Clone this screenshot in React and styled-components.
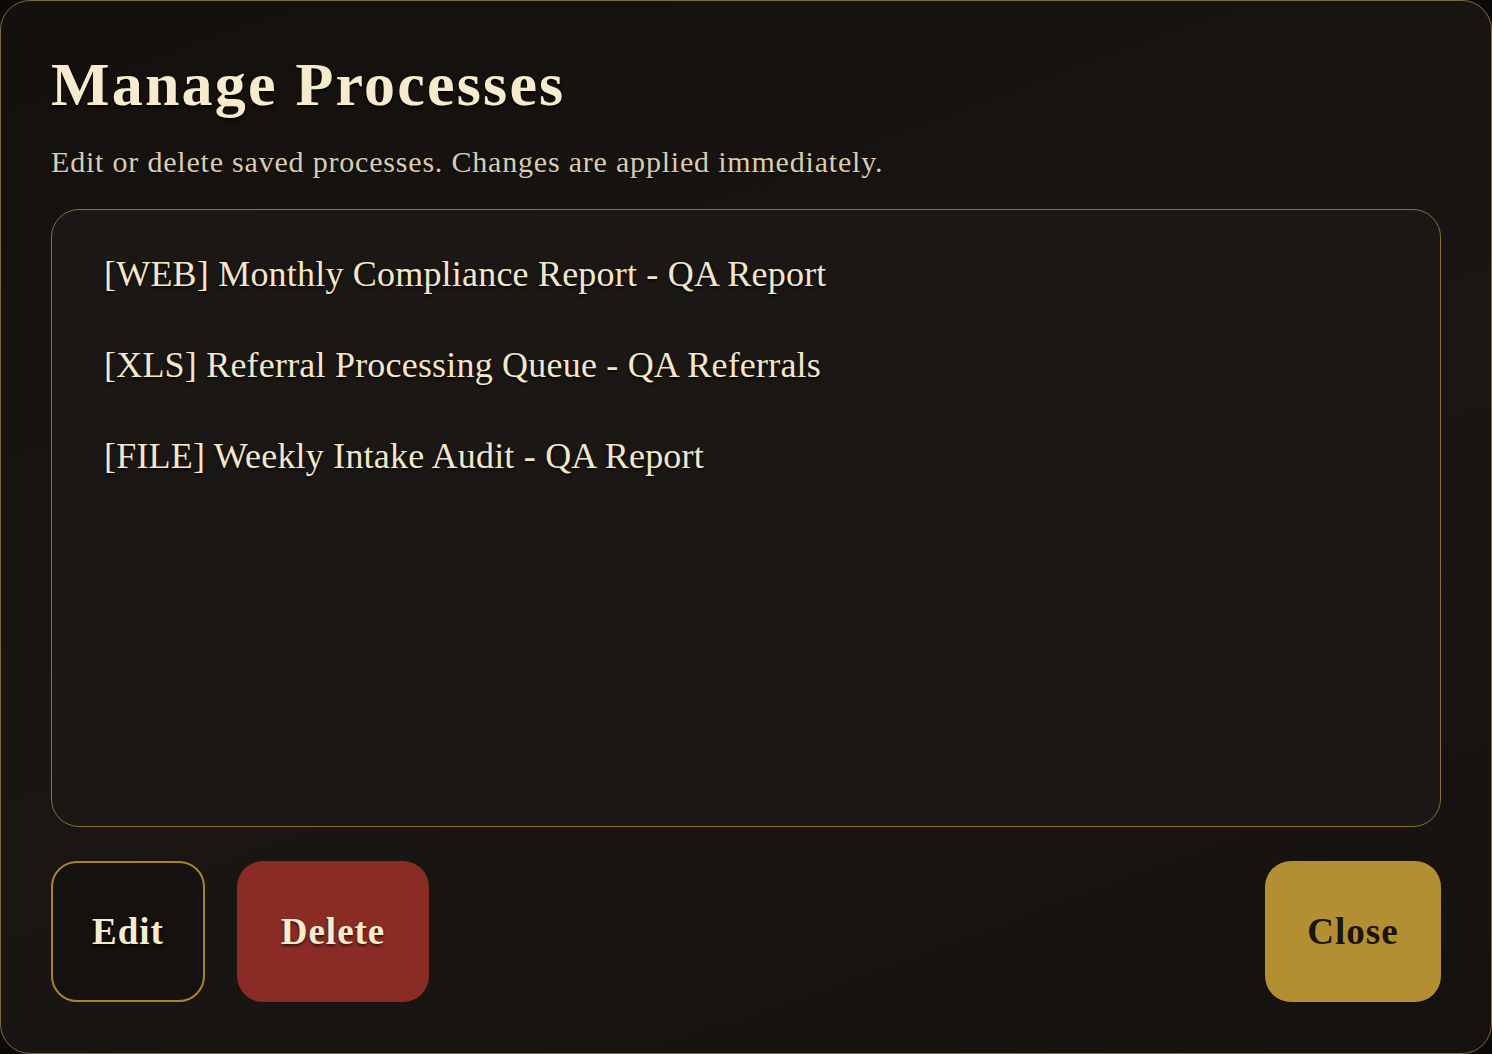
import React, { useState } from 'react';
import styled, { createGlobalStyle } from 'styled-components';

const GlobalStyle = createGlobalStyle`
  html, body {
    margin: 0;
    padding: 0;
    background: #0b0a08;
  }
  * {
    box-sizing: border-box;
  }
`;

const Dialog = styled.div`
  width: 1492px;
  height: 1054px;
  display: flex;
  flex-direction: column;
  padding: 50px 50px 50px 50px;
  background: linear-gradient(160deg, #13100d 0%, #1a1613 55%, #14110e 100%);
  border: 1.5px solid #7d6844;
  border-radius: 30px;
  font-family: "Liberation Serif", "DejaVu Serif", serif;
`;

const Title = styled.h1`
  margin: 0;
  font-size: 62px;
  line-height: 66px;
  font-weight: 700;
  letter-spacing: 2.2px;
  color: #f6ebcd;
  text-shadow: 0 2px 3px rgba(0, 0, 0, 0.75);
`;

const Subtitle = styled.p`
  margin: 27px 0 0 0;
  font-size: 30px;
  line-height: 36px;
  letter-spacing: 0.8px;
  color: #d9ccb0;
  text-shadow: 0 1px 2px rgba(0, 0, 0, 0.6);
`;

const List = styled.ul`
  list-style: none;
  margin: 29px 0 0 0;
  padding: 40px 52px;
  height: 618px;
  border: 1.5px solid #8c7034;
  border-radius: 28px;
  background: #1b1714;
  display: flex;
  flex-direction: column;
  gap: 43px;
`;

const Item = styled.li`
  font-size: 36px;
  line-height: 48px;
  letter-spacing: 0.2px;
  color: ${(props) => (props.$selected ? '#ffe9a8' : '#f2e7cc')};
  text-shadow: 0 2px 3px rgba(0, 0, 0, 0.7);
  cursor: pointer;
`;

const Actions = styled.div`
  margin-top: 34px;
  display: flex;
  align-items: center;
  gap: 32px;
`;

const Spacer = styled.div`
  flex: 1;
`;

const Button = styled.button`
  width: ${(props) => props.$w}px;
  height: 141px;
  padding: 0;
  border-radius: 26px;
  font-family: inherit;
  font-size: 37px;
  font-weight: 700;
  letter-spacing: 1px;
  cursor: pointer;
  border: 2px solid
    ${(props) =>
      props.$variant === 'outline' ? '#a7832e' : 'transparent'};
  background: ${(props) =>
    props.$variant === 'danger'
      ? '#8a2b25'
      : props.$variant === 'gold'
      ? '#b48f31'
      : '#14110e'};
  color: ${(props) => (props.$variant === 'gold' ? '#1b1510' : '#f6ebcd')};
  text-shadow: ${(props) =>
    props.$variant === 'gold' ? 'none' : '0 2px 3px rgba(0, 0, 0, 0.6)'};
`;

const processes = [
  { id: 1, type: 'WEB', name: 'Monthly Compliance Report', group: 'QA Report' },
  { id: 2, type: 'XLS', name: 'Referral Processing Queue', group: 'QA Referrals' },
  { id: 3, type: 'FILE', name: 'Weekly Intake Audit', group: 'QA Report' },
];

const App = () => {
  const [selected, setSelected] = useState(null);

  return (
    <>
      <GlobalStyle />
      <Dialog>
        <Title>Manage Processes</Title>
        <Subtitle>Edit or delete saved processes. Changes are applied immediately.</Subtitle>
        <List>
          {processes.map((p) => (
            <Item key={p.id} $selected={selected === p.id} onClick={() => setSelected(p.id)}>
              [{p.type}] {p.name} - {p.group}
            </Item>
          ))}
        </List>
        <Actions>
          <Button $variant="outline" $w={154}>Edit</Button>
          <Button $variant="danger" $w={192}>Delete</Button>
          <Spacer />
          <Button $variant="gold" $w={176}>Close</Button>
        </Actions>
      </Dialog>
    </>
  );
};

export default App;
